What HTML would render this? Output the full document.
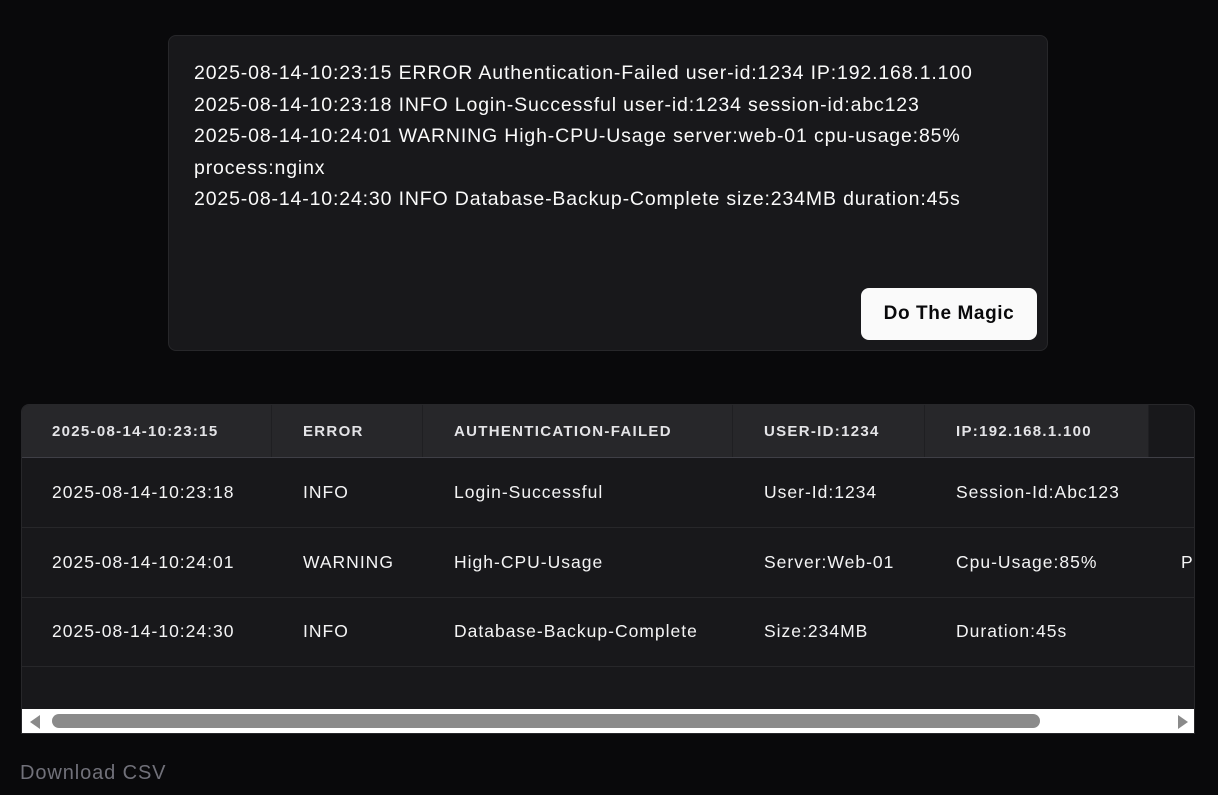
<!DOCTYPE html>
<html><head><meta charset="utf-8"><style>
*{margin:0;padding:0;box-sizing:border-box}
body{width:1218px;height:795px;background:#09090b;font-family:"Liberation Sans",sans-serif;color:#fafafa;position:relative;overflow:hidden}
.card{position:absolute;left:168px;top:35px;width:880px;height:316px;background:#18181b;border:1px solid #27272a;border-radius:8px}
.log{position:absolute;left:25px;top:22px;font-size:19.5px;line-height:31.5px;color:#fafafa;width:840px;letter-spacing:0.85px}
.btn{position:absolute;left:692px;top:252px;width:176px;height:52px;background:#fafafa;border-radius:8px;color:#09090b;font-size:19px;font-weight:600;display:flex;align-items:center;justify-content:center;letter-spacing:0.6px}
.tbl{position:absolute;left:21px;top:404px;width:1174px;height:330px;background:#18181b;border:1px solid #27272a;border-radius:8px 8px 0 0;overflow:hidden}
.row{position:absolute;left:0;height:70px;width:1400px;border-bottom:1px solid #27272a}
.cell{position:absolute;top:0;height:100%;display:flex;align-items:center;font-size:17.5px;color:#f4f4f5;letter-spacing:1px}
.hdr{top:0;height:53px;border-bottom:1px solid #3f3f46}
.hdr .cell{background:#27272a;font-size:15px;font-weight:700;color:#e4e4e7;border-right:1px solid #1f1f22;letter-spacing:1.3px}
.c1{left:0;width:250px;padding-left:30px}.c2{left:250px;width:151px;padding-left:31px}.c3{left:401px;width:310px;padding-left:31px}.c4{left:711px;width:192px;padding-left:31px}.c5{left:903px;width:224px;padding-left:31px}.c6{left:1127px;width:250px;padding-left:32px}
.sb{position:absolute;left:0;top:304px;width:1174px;height:25px;background:#fff}
.thumb{position:absolute;left:30px;top:5px;width:988px;height:14px;background:#8a8a8a;border-radius:7px}
.al{position:absolute;left:8px;top:6px;width:0;height:0;border-top:7px solid transparent;border-bottom:7px solid transparent;border-right:10px solid #8a8a8a}
.ar{position:absolute;right:8px;top:6px;width:0;height:0;border-top:7px solid transparent;border-bottom:7px solid transparent;border-left:10px solid #8a8a8a}
.dl{position:absolute;left:20px;top:762px;font-size:20px;color:#71717a;letter-spacing:0.9px}
</style></head><body>
<div class="card">
<div class="log">2025-08-14-10:23:15 ERROR Authentication-Failed user-id:1234 IP:192.168.1.100<br>2025-08-14-10:23:18 INFO Login-Successful user-id:1234 session-id:abc123<br>2025-08-14-10:24:01 WARNING High-CPU-Usage server:web-01 cpu-usage:85%<br>process:nginx<br>2025-08-14-10:24:30 INFO Database-Backup-Complete size:234MB duration:45s</div>
<div class="btn">Do The Magic</div>
</div>
<div class="tbl">
<div class="row hdr"><div class="cell c1">2025-08-14-10:23:15</div><div class="cell c2">ERROR</div><div class="cell c3">AUTHENTICATION-FAILED</div><div class="cell c4">USER-ID:1234</div><div class="cell c5">IP:192.168.1.100</div></div>
<div class="row" style="top:53px"><div class="cell c1">2025-08-14-10:23:18</div><div class="cell c2">INFO</div><div class="cell c3">Login-Successful</div><div class="cell c4">User-Id:1234</div><div class="cell c5">Session-Id:Abc123</div></div>
<div class="row" style="top:123px"><div class="cell c1">2025-08-14-10:24:01</div><div class="cell c2">WARNING</div><div class="cell c3">High-CPU-Usage</div><div class="cell c4">Server:Web-01</div><div class="cell c5">Cpu-Usage:85%</div><div class="cell c6">Process:Nginx</div></div>
<div class="row" style="top:192px"><div class="cell c1">2025-08-14-10:24:30</div><div class="cell c2">INFO</div><div class="cell c3">Database-Backup-Complete</div><div class="cell c4">Size:234MB</div><div class="cell c5">Duration:45s</div></div>
<div class="sb"><div class="al"></div><div class="thumb"></div><div class="ar"></div></div>
</div>
<div class="dl">Download CSV</div>
</body></html>
